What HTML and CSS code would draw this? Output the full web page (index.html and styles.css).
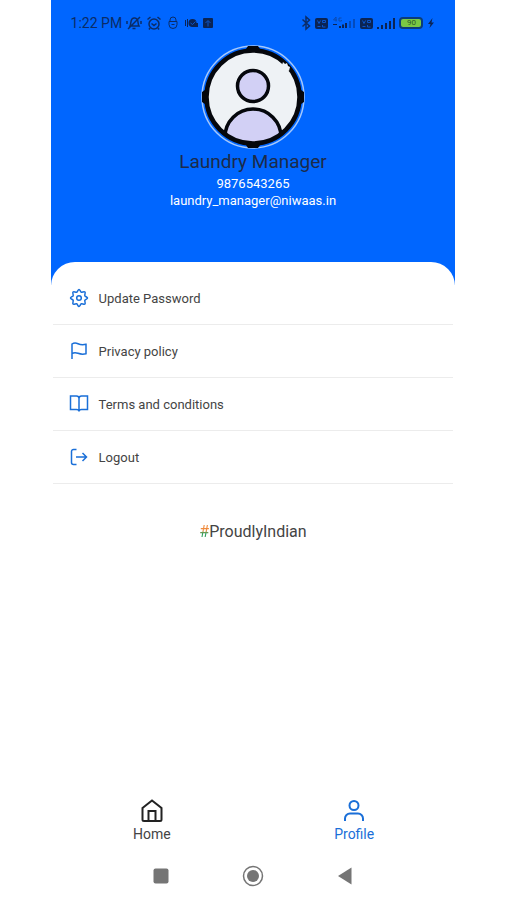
FILE: index.html
```html
<!DOCTYPE html>

<html lang="en">
  <head>
    <meta charset="UTF-8" />
    <meta name="viewport" content="width=device-width, initial-scale=1.0" />
    <title>Profile</title>
    <link rel="stylesheet" href="styles.css" />
  </head>
  <body>
    <div class="phone">
      <header class="header">
        <div class="status-bar">
          <div class="status-left">
            <span class="time">1:22 PM</span>
            <!-- muted bell -->
            <svg width="16" height="16" viewBox="0 0 16 16" class="line">
              <path d="M4 11c1-2 .5-5 2-7 1.500-1.500 4.500-1.200 5.500.8.8 2 .3 4.200 1.500 6.200zM6.500 13.500h3M2 14L14 2M1 6v3M15 6v3" />
            </svg>
            <!-- alarm -->
            <svg width="16" height="16" viewBox="0 0 16 16" class="line">
              <circle cx="8" cy="9" r="5" />
              <path d="M5.500 8.500L8 10.500l2.500-2M1.500 4.500l3-2.500M14.500 4.500l-3-2.500M4 13l-1 1.500M12 13l1 1.500" />
            </svg>
            <svg width="14" height="16" viewBox="0 0 14 16" class="line thin">
              <path d="M4 6V5a3 3 0 0 1 6 0v1M3 6.500h8v3a4 4 0 0 1-8 0zM5.500 9.500h3" />
            </svg>
            <svg width="14" height="16" viewBox="0 0 14 16" class="solid">
              <path d="M1 5h1v6H1zM3 4h1v8H3z" />
              <circle cx="8.500" cy="8" r="4" />
              <path d="M9 8h5v4H9z" />
              <path d="M6.500 8l2 1.500 3-3" class="cut" />
            </svg>
            <svg width="12" height="16" viewBox="0 0 12 16" class="solid">
              <rect x="1" y="3" width="10" height="10" rx="1" />
              <path d="M6 11.500V6M3.500 8L6 5.500 8.500 8" class="cut" />
            </svg>
          </div>
          <div class="status-right">
            <!-- bluetooth -->
            <svg width="10" height="16" viewBox="0 0 10 16" class="line">
              <path d="M1.500 4.500l7 6.500L5 14V2l3.500 3-7 6.500" />
            </svg>
            <svg width="13" height="16" viewBox="0 0 13 16" class="solid">
              <rect y="3" width="13" height="11" rx="2" />
              <path d="M2.500 5.500l1.500 3 1.500-3M7.500 5.500h3v2h-3zM2.500 11.500h3M7.500 10v2h3" class="cut" />
            </svg>
            <svg width="24" height="16" viewBox="0 0 24 16" class="solid">
              <path d="M4 2L1.500 5H5M4 2v4.500M9.500 3H7v3h2.500V5" class="mark" />
              <path d="M1 9h4v1H1zM7 11h2v2H7zM10 9.500h2V13h-2zM13 8h2v5h-2z" />
              <path d="M17 6h2v7h-2zM21 4h2v9h-2z" class="faded" />
            </svg>
            <svg width="13" height="16" viewBox="0 0 13 16" class="solid">
              <rect y="3" width="13" height="11" rx="2" />
              <path d="M2.500 5.500l1.500 3 1.500-3M7.500 5.500h3v2h-3zM2.500 11.500h3M7.500 10v2h3" class="cut" />
            </svg>
            <svg width="18" height="16" viewBox="0 0 18 16" class="solid">
              <path d="M0 12h2v2H0zM4 10h2v4H4zM8 8h2v6H8zM12 6h2v8h-2zM16 3h2v11h-2z" />
            </svg>
            <span class="battery">90</span>
            <!-- charging -->
            <svg width="8" height="16" viewBox="0 0 8 16" class="solid">
              <path d="M5.500 3L1 9h2.500L2.500 13 7 7.500H4.500z" />
            </svg>
          </div>
        </div>

        <div class="profile">
          <svg class="avatar" width="104" height="104" viewBox="0 0 104 104">
            <defs>
              <clipPath id="face"><circle cx="52" cy="52" r="46" /></clipPath>
            </defs>
            <circle cx="52" cy="52" r="51" fill="#0066ff" stroke="#a5c8fa" stroke-width="1.500" />
            <path d="M47 1h10l4 6H43zM47 103h10l4-6H43zM1 47v10l6 4V43zM103 47v10l-6 4V43z" fill="#05070c" />
            <circle cx="52" cy="52" r="46" fill="#eef2f5" />
            <g clip-path="url(#face)" fill="#d2d0f5" stroke="#05070c" stroke-width="3.500">
              <circle cx="52" cy="41" r="15.500" />
              <path d="M24 108V92a28 28 0 0 1 56 0v16z" />
            </g>
            <circle cx="52" cy="52" r="46.500" fill="none" stroke="#05070c" stroke-width="4.500" />
            <path d="M81 20l1-3 2 2 2-1 1 3 2 1-1 4-3-1-1-2z" fill="#eef2f5" />
          </svg>
          <h1 class="name">Laundry Manager</h1>
          <p class="contact">9876543265</p>
          <p class="contact">laundry_manager@niwaas.in</p>
        </div>
      </header>

      <main class="sheet">
        <ul class="menu">
          <li>
            <a href="#password">
              <svg width="20" height="20" viewBox="0 0 20 20">
                <path d="M10 1.500C11 1.500 11.500 4 12.300 4.200S15.300 3.300 16 4s-.5 2.800-.2 3.700S18.500 9 18.500 10s-2.400 1.500-2.700 2.300.9 3 .2 3.700-2.800-.5-3.700-.2S11 18.500 10 18.500s-1.500-2.400-2.300-2.700-3 .9-3.700.2.500-2.800.2-3.700S1.500 11 1.500 10s2.400-1.500 2.700-2.300S3.300 4.700 4 4s2.800.5 3.700.2S9 1.500 10 1.500z" />
                <circle cx="10" cy="10" r="2.300" />
              </svg>
              Update Password
            </a>
          </li>
          <li>
            <a href="#privacy">
              <svg width="20" height="20" viewBox="0 0 20 20">
                <path d="M3 18V3c1.500-1 4-1.200 6-.3s4.500 1.300 8 .6v9.400c-3 .8-5.500.5-8-.4s-4.500-.7-6 .4" />
              </svg>
              Privacy policy
            </a>
          </li>
          <li>
            <a href="#terms">
              <svg width="20" height="20" viewBox="0 0 20 20">
                <path d="M10 17.500v-13C10 3 9 2 7.500 2h-6v13.500h6c1.500 0 2.500.7 2.500 2 0-1.300 1-2 2.500-2h6V2h-6C11 2 10 3 10 4.500" />
              </svg>
              Terms and conditions
            </a>
          </li>
          <li>
            <a href="#logout">
              <svg width="20" height="20" viewBox="0 0 20 20">
                <path d="M7.500 2.500h-3A2 2 0 0 0 2.500 4.500v11a2 2 0 0 0 2 2h3M7 10h10.500M13.500 6l4 4-4 4" />
              </svg>
              Logout
            </a>
          </li>
        </ul>
        <p class="tagline"><span class="hash">#</span>ProudlyIndian</p>
      </main>

      <nav class="tabs">
        <a href="#home" class="tab">
          <svg width="24" height="24" viewBox="0 0 24 24">
            <path d="M2.500 9L12 1.500 21.500 9v11.500a1.500 1.500 0 0 1-1.500 1.500H4a1.500 1.500 0 0 1-1.500-1.500zM8.500 22V12h7v10" />
          </svg>
          Home
        </a>
        <a href="#profile" class="tab active">
          <svg width="24" height="24" viewBox="0 0 24 24">
            <circle cx="12" cy="6.500" r="4.500" />
            <path d="M3 22v-2.500a5 5 0 0 1 5-5h8a5 5 0 0 1 5 5V22" />
          </svg>
          Profile
        </a>
      </nav>

      <div class="system-nav">
        <button type="button" aria-label="Recent apps">
          <svg width="22" height="22" viewBox="0 0 22 22">
            <rect x="3.500" y="3.500" width="15" height="15" rx="2" fill="#757575" />
          </svg>
        </button>
        <button type="button" aria-label="Home screen">
          <svg width="22" height="22" viewBox="0 0 22 22">
            <circle cx="11" cy="11" r="9.500" fill="none" stroke="#757575" stroke-width="1.500" />
            <circle cx="11" cy="11" r="6" fill="#757575" />
          </svg>
        </button>
        <button type="button" aria-label="Back">
          <svg width="22" height="22" viewBox="0 0 22 22">
            <path d="M4 11l13.500-8.500v17z" fill="#757575" />
          </svg>
        </button>
      </div>
    </div>
  </body>
</html>
```
FILE: styles.css
```css
* {
  box-sizing: border-box;
}
body {
  margin: 0;
  background-color: #fff;
  font-family: Roboto, "Liberation Sans", sans-serif;
  color: #444;
}
h1,
p,
ul {
  margin: 0;
  padding: 0;
}
a {
  color: inherit;
  text-decoration: none;
}
svg {
  display: block;
  flex: none;
}

.phone {
  display: flex;
  flex-direction: column;
  width: 80%;
  min-height: 100vh;
  margin: 0 auto;
}

/* header */
.header {
  padding-bottom: 76px;
  background-color: #0066ff;
}
.status-bar {
  display: flex;
  justify-content: space-between;
  align-items: center;
  height: 45px;
  padding: 0 20px;
  color: #0b2c66;
}
.status-left,
.status-right {
  display: flex;
  align-items: center;
  gap: 4px;
}
.time {
  font-size: 14px;
}
.line {
  fill: none;
  stroke: #0b2c66;
  stroke-width: 1.5;
}
.thin {
  stroke-width: 1;
}
.solid {
  fill: #0b2454;
}
.cut {
  fill: none;
  stroke: #0a55cb;
}
.mark {
  fill: none;
  stroke: #0b4bb0;
}
.faded {
  opacity: 0.4;
}
.battery {
  width: 24px;
  border: 2px solid #0b3c7a;
  border-radius: 4px;
  background-color: #7ac943;
  color: #2d5a2a;
  font-size: 8px;
  line-height: 8px;
  text-align: center;
}
.profile {
  display: flex;
  flex-direction: column;
  align-items: center;
}
.name {
  color: #1c2b4a;
  font-size: 19px;
  font-weight: 400;
  line-height: 26px;
}
.contact {
  color: #fff;
  font-size: 13px;
  line-height: 17px;
}

/* white sheet that overlaps the header */
.sheet {
  flex: 1;
  margin-top: -23px;
  padding-top: 10px;
  border-radius: 24px 24px 0 0;
  background-color: #fff;
}
.menu {
  margin: 0 2px;
  list-style: none;
}
.menu li {
  border-bottom: 1px solid #ececec;
}
.menu a {
  display: flex;
  align-items: center;
  gap: 10px;
  height: 52px;
  padding: 0 16px;
  font-size: 13px;
}
.menu svg {
  fill: none;
  stroke: #1a6fd8;
  stroke-width: 1.5;
}
.tagline {
  margin-top: 38px;
  font-size: 16px;
  line-height: 20px;
  text-align: center;
}
.hash {
  background: linear-gradient(#f08a3c 45%, #2f9e5b 60%);
  background-clip: text;
  -webkit-background-clip: text;
  color: transparent;
}

/* bottom navigation */
.tabs {
  display: flex;
}
.tab {
  display: flex;
  flex: 1;
  flex-direction: column;
  align-items: center;
  gap: 2px;
  font-size: 14px;
  line-height: 18px;
}
.tab svg {
  fill: none;
  stroke: #222;
  stroke-width: 2;
}
.tab.active {
  color: #1a6fd8;
}
.tab.active svg {
  stroke: #1a6fd8;
}
.system-nav {
  display: flex;
  justify-content: center;
  gap: 70px;
  padding: 22px 0 13px;
}
.system-nav button {
  padding: 0;
  border: 0;
  background: none;
}
```
